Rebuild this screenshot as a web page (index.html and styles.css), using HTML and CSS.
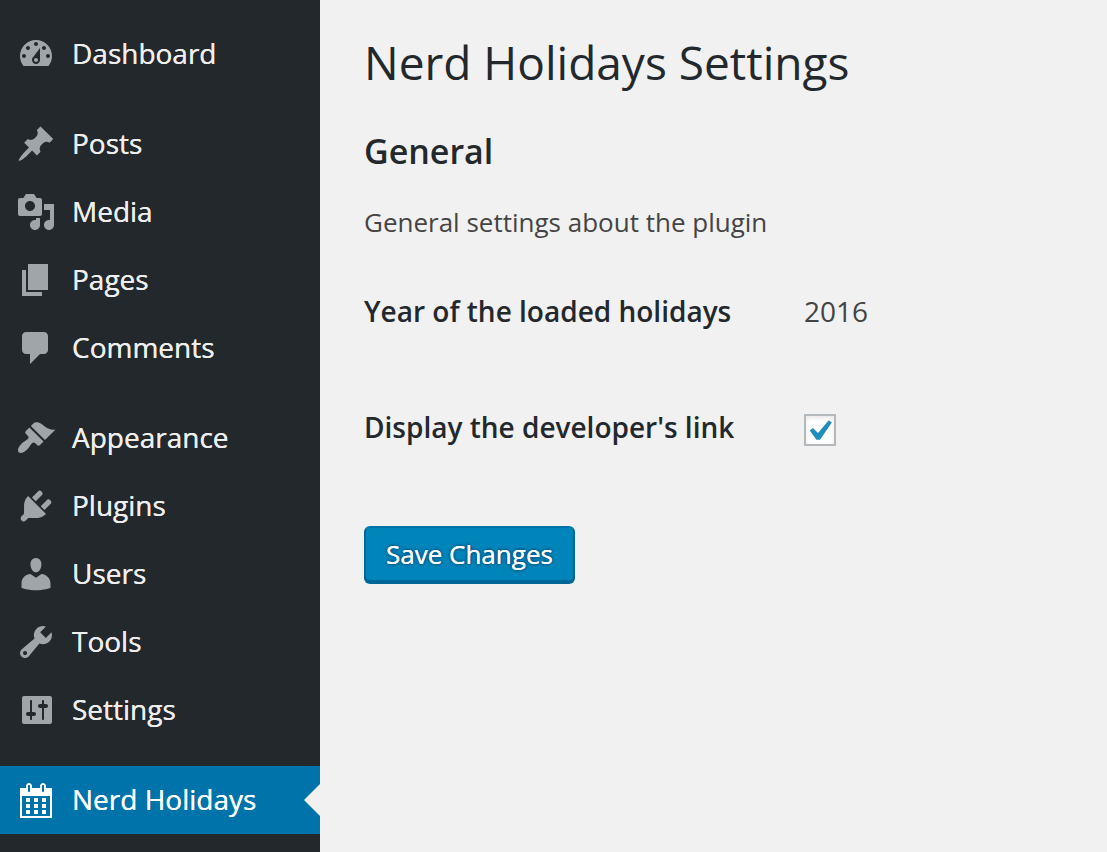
FILE: index.html
```html
<!DOCTYPE html>
<html lang="en">
<head>
<meta charset="utf-8">
<meta name="viewport" content="width=device-width, initial-scale=1">
<title>Nerd Holidays Settings</title>
<link rel="stylesheet" href="styles.css">
</head>
<body>
<div class="layout">
  <nav class="sidebar" aria-label="Main menu">
    <ul class="menu">
      <li><a class="menu-link" href="#"><svg class="menu-icon" viewBox="0 0 20 20" aria-hidden="true"><path d="M3.76 16h12.48c1.1-1.37 1.76-3.11 1.76-5 0-4.42-3.58-8-8-8s-8 3.58-8 8c0 1.89.66 3.63 1.76 5zM10 4c.55 0 1 .45 1 1s-.45 1-1 1-1-.45-1-1 .45-1 1-1zM6 6c.55 0 1 .45 1 1s-.45 1-1 1-1-.45-1-1 .45-1 1-1zm8 0c.55 0 1 .45 1 1s-.45 1-1 1-1-.45-1-1 .45-1 1-1zm-5.37 5.55L12 7v6c0 1.1-.9 2-2 2s-2-.9-2-2c0-.57.24-1.08.63-1.45zM4 10c.55 0 1 .45 1 1s-.45 1-1 1-1-.45-1-1 .45-1 1-1zm12 0c.55 0 1 .45 1 1s-.45 1-1 1-1-.45-1-1 .45-1 1-1zm-5 3c0-.55-.45-1-1-1s-1 .45-1 1 .45 1 1 1 1-.45 1-1z"/></svg>Dashboard</a></li>
    </ul>
    <ul class="menu">
      <li><a class="menu-link" href="#"><svg class="menu-icon" viewBox="0 0 20 20" aria-hidden="true"><path d="M10.44 3.02l1.82-1.82 6.36 6.35-1.83 1.82c-1.05-.68-2.48-.57-3.41.36l-.75.75c-.92.93-1.04 2.35-.35 3.41l-1.83 1.82-2.41-2.41-2.8 2.79c-.42.42-3.38 2.71-3.8 2.29s1.86-3.39 2.28-3.81l2.79-2.79L4.1 9.36l1.83-1.82c1.05.69 2.48.57 3.4-.36l.75-.75c.93-.92 1.05-2.35.36-3.41z"/></svg>Posts</a></li>
      <li><a class="menu-link" href="#"><svg class="menu-icon" viewBox="0 0 20 20" aria-hidden="true"><path d="M13 11V4c0-.55-.45-1-1-1h-1.67L9 1H5L3.67 3H2c-.55 0-1 .45-1 1v7c0 .55.45 1 1 1h10c.55 0 1-.45 1-1zM7 4.5c1.38 0 2.5 1.12 2.5 2.5S8.38 9.5 7 9.5 4.5 8.38 4.5 7 5.62 4.5 7 4.5zM14 6h5v10.5c0 1.38-1.12 2.5-2.5 2.5S14 17.88 14 16.5s1.12-2.5 2.5-2.5c.17 0 .34.02.5.05V9h-3V6zm-4 8.05V13h2v3.5c0 1.38-1.12 2.5-2.5 2.5S7 17.88 7 16.5 8.12 14 9.5 14c.17 0 .34.02.5.05z"/></svg>Media</a></li>
      <li><a class="menu-link" href="#"><svg class="menu-icon" viewBox="0 0 20 20" aria-hidden="true"><path d="M6 15V2h10v13H6zm-1 1h8v2H3V5h2v11z"/></svg>Pages</a></li>
      <li><a class="menu-link" href="#"><svg class="menu-icon" viewBox="0 0 20 20" aria-hidden="true"><path d="M5 2h9c1.1 0 2 .9 2 2v7c0 1.1-.9 2-2 2h-2l-5 5v-5H5c-1.1 0-2-.9-2-2V4c0-1.1.9-2 2-2z"/></svg>Comments</a></li>
    </ul>
    <ul class="menu">
      <li><a class="menu-link" href="#"><svg class="menu-icon" viewBox="0 0 20 20" aria-hidden="true"><path d="M14.48 11.06L7.41 3.99l1.5-1.5c.5-.56 2.3-.47 3.51.32 1.21.8 1.43 1.28 2.91 2.1 1.18.64 2.45 1.26 4.45.85zm-.71.71L6.7 4.7 4.93 6.47c-.39.39-.39 1.02 0 1.41l1.06 1.06c.39.39.39 1.03 0 1.42-.6.6-1.43 1.11-2.21 1.69-.35.26-.7.53-1.01.84C1.43 14.23.4 16.08 1.4 17.07c.99 1 2.84-.03 4.18-1.36.31-.31.58-.66.85-1.02.57-.78 1.08-1.61 1.69-2.21.39-.39 1.02-.39 1.41 0l1.06 1.06c.39.39 1.02.39 1.41 0z"/></svg>Appearance</a></li>
      <li><a class="menu-link" href="#"><svg class="menu-icon" viewBox="0 0 20 20" aria-hidden="true"><path d="M13.11 4.36L9.87 7.6 8 5.73l3.24-3.24c.35-.34 1.05-.2 1.56.32.52.51.66 1.21.31 1.55zm-8 1.77l.91-1.12 9.01 9.01-1.19.84c-.71.71-2.63 1.16-3.82 1.16H6.14L4.9 17.26c-.59.59-1.54.59-2.12 0-.59-.58-.59-1.53 0-2.12l1.24-1.24v-3.88c0-1.13.4-3.19 1.09-3.89zm7.26 3.97l3.24-3.24c.34-.35 1.04-.21 1.55.31.52.51.66 1.21.31 1.55l-3.24 3.25z"/></svg>Plugins</a></li>
      <li><a class="menu-link" href="#"><svg class="menu-icon" viewBox="0 0 20 20" aria-hidden="true"><path d="M10 9.25c-2.27 0-2.73-3.44-2.73-3.44C7 4.02 7.82 2 9.97 2c2.16 0 2.98 2.02 2.71 3.81 0 0-.41 3.44-2.68 3.44zm0 2.57L12.72 10c2.39 0 4.52 2.33 4.52 4.53v2.49s-3.65 1.13-7.24 1.13c-3.65 0-7.24-1.13-7.24-1.13v-2.49c0-2.25 1.94-4.48 4.47-4.48z"/></svg>Users</a></li>
      <li><a class="menu-link" href="#"><svg class="menu-icon" viewBox="0 0 20 20" aria-hidden="true"><path d="M16.68 9.77c-1.34 1.34-3.3 1.67-4.95.99l-5.41 6.52c-.99.99-2.59.99-3.58 0s-.99-2.59 0-3.57l6.52-5.42c-.68-1.65-.35-3.61.99-4.95 1.28-1.28 3.12-1.62 4.72-1.06l-2.89 2.89 2.82 2.82 2.86-2.87c.53 1.58.18 3.39-1.08 4.65zM3.81 16.21c.4.39 1.04.39 1.43 0 .4-.4.4-1.04 0-1.43-.39-.4-1.03-.4-1.43 0-.39.39-.39 1.03 0 1.43z"/></svg>Tools</a></li>
      <li><a class="menu-link" href="#"><svg class="menu-icon" viewBox="0 0 20 20" aria-hidden="true"><path d="M18 16V4c0-.55-.45-1-1-1H4c-.55 0-1 .45-1 1v12c0 .55.45 1 1 1h13c.55 0 1-.45 1-1zM8 11h1c.55 0 1 .45 1 1s-.45 1-1 1H8v1.5c0 .28-.22.5-.5.5s-.5-.22-.5-.5V13H6c-.55 0-1-.45-1-1s.45-1 1-1h1V5.5c0-.28.22-.5.5-.5s.5.22.5.5V11zm5-2h-1c-.55 0-1-.45-1-1s.45-1 1-1h1V5.5c0-.28.22-.5.5-.5s.5.22.5.5V7h1c.55 0 1 .45 1 1s-.45 1-1 1h-1v5.5c0 .28-.22.5-.5.5s-.5-.22-.5-.5V9z"/></svg>Settings</a></li>
    </ul>
    <ul class="menu">
      <li><a class="menu-link is-current" href="#" aria-current="page"><svg class="menu-icon" viewBox="0 0 20 20" aria-hidden="true"><path d="M15 4h3v15H2V4h3V3c0-.41.15-.76.44-1.06.29-.29.65-.44 1.06-.44s.77.15 1.06.44c.29.3.44.65.44 1.06v1h4V3c0-.41.15-.76.44-1.06.29-.29.65-.44 1.06-.44s.77.15 1.06.44c.29.3.44.65.44 1.06v1zM6 3v2.5c0 .14.05.26.15.36.09.09.21.14.35.14s.26-.05.35-.14c.1-.1.15-.22.15-.36V3c0-.14-.05-.26-.15-.35-.09-.1-.21-.15-.35-.15s-.26.05-.35.15c-.1.09-.15.21-.15.35zm7 0v2.5c0 .14.05.26.14.36.1.09.22.14.36.14s.26-.05.36-.14c.09-.1.14-.22.14-.36V3c0-.14-.05-.26-.14-.35-.1-.1-.22-.15-.36-.15s-.26.05-.36.15c-.09.09-.14.21-.14.35zm4 15V8H3v10h14zM7 9v2H5V9h2zm2 0h2v2H9V9zm4 2V9h2v2h-2zm-6 1v2H5v-2h2zm2 0h2v2H9v-2zm4 2v-2h2v2h-2zm-6 1v2H5v-2h2zm4 2H9v-2h2v2zm4 0h-2v-2h2v2z"/></svg>Nerd Holidays</a></li>
    </ul>
  </nav>
  <main class="content">
    <h1 class="page-title">Nerd Holidays Settings</h1>
    <form>
      <h2 class="section-title">General</h2>
      <p class="description">General settings about the plugin</p>
      <table class="form-table">
        <tr>
          <th scope="row">Year of the loaded holidays</th>
          <td>2016</td>
        </tr>
        <tr>
          <th scope="row"><label for="developer-link">Display the developer's link</label></th>
          <td>
            <span class="check">
              <input class="check-input" type="checkbox" id="developer-link" checked>
              <svg class="check-mark" viewBox="0 0 32 32" aria-hidden="true"><path d="M5.700 16.400L9 14.100l5 4.900L24.800 6.200l3 2.200L16 25.800h-3.500z"/></svg>
            </span>
          </td>
        </tr>
      </table>
      <button class="save-button" type="button">Save Changes</button>
    </form>
  </main>
</div>
</body>
</html>
```
FILE: styles.css
```css
* {
  box-sizing: border-box;
}

body {
  margin: 0;
  background: #f1f1f1;
  color: #444;
  font-family: "Open Sans", sans-serif;
  font-size: 28px;
  line-height: 34px;
}

.layout {
  display: flex;
  min-height: 100vh;
}

.sidebar {
  flex: 0 0 320px;
  display: flex;
  flex-direction: column;
  gap: 22px;
  padding: 20px 0 18px;
  background: #23282d;
}

.menu {
  margin: 0;
  padding: 0;
  list-style: none;
}

.menu-link {
  position: relative;
  display: flex;
  align-items: flex-start;
  gap: 16px;
  padding: 14px 16px;
  color: #eee;
  line-height: 38px;
  text-decoration: none;
  text-shadow: 0 0 0 currentColor;
}

.menu-icon {
  width: 40px;
  height: 40px;
  fill: #a0a5aa;
}

.is-current {
  background: #0073aa;
  color: #fff;
}

.is-current .menu-icon {
  fill: #fff;
}

.is-current::after {
  content: "";
  position: absolute;
  top: 50%;
  right: 0;
  margin-top: -16px;
  border: 16px solid transparent;
  border-left-width: 0;
  border-right-color: #f1f1f1;
}

.content {
  flex: 1;
  min-width: 0;
  padding: 32px 40px 32px 44px;
}

.page-title {
  margin: 0 0 36px;
  color: #23282d;
  font-size: 46px;
  font-weight: 400;
  line-height: 60px;
}

.section-title {
  margin: 0 0 30px;
  color: #23282d;
  font-size: 34px;
  font-weight: 600;
  line-height: 46px;
}

.description {
  margin: 0 0 14px;
  font-size: 26px;
  line-height: 36px;
}

.form-table {
  width: 100%;
  border-collapse: collapse;
}

.form-table th {
  width: 440px;
  padding: 40px 20px 42px 0;
  color: #23282d;
  font-weight: 600;
  text-align: left;
  vertical-align: top;
}

.form-table td {
  padding: 40px 0;
  vertical-align: top;
}

.check {
  position: relative;
  display: block;
  width: 32px;
  height: 32px;
  margin-top: 4px;
}

.check-input {
  display: block;
  width: 32px;
  height: 32px;
  margin: 0;
  appearance: none;
  border: 2px solid #b4b9be;
  background: #fff;
  box-shadow: inset 0 2px 4px rgba(0, 0, 0, 0.1);
}

.check-mark {
  position: absolute;
  inset: 0;
  fill: #1e8cbe;
  pointer-events: none;
}

.check-input:not(:checked) + .check-mark {
  display: none;
}

.save-button {
  display: block;
  margin-top: 40px;
  padding: 9px 20px;
  border: 2px solid #006799;
  border-top-color: #0073aa;
  border-radius: 6px;
  background: #0085ba;
  box-shadow: 0 2px 0 #006799;
  color: #fff;
  font: inherit;
  font-size: 26px;
  text-shadow: 0 0 0 #fff, 0 -2px 2px #006799, 2px 0 2px #006799, 0 2px 2px #006799, -2px 0 2px #006799;
}
```
